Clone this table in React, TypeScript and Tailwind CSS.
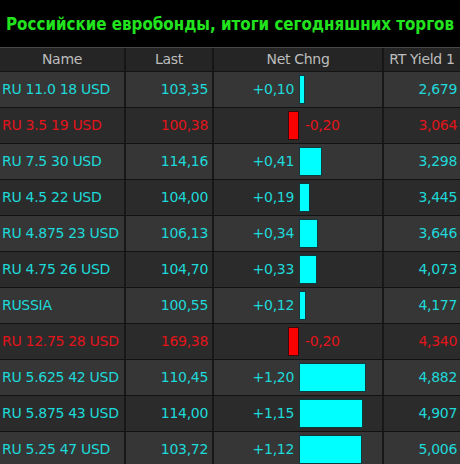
import React from "react";

type Row = { name: string; last: string; chg: number; chgText: string; yld: string; neg?: boolean };

const rows: Row[] = [
  { name: "RU 11.0 18 USD", last: "103,35", chg: 0.1, chgText: "+0,10", yld: "2,679" },
  { name: "RU 3.5 19 USD", last: "100,38", chg: -0.2, chgText: "-0,20", yld: "3,064", neg: true },
  { name: "RU 7.5 30 USD", last: "114,16", chg: 0.41, chgText: "+0,41", yld: "3,298" },
  { name: "RU 4.5 22 USD", last: "104,00", chg: 0.19, chgText: "+0,19", yld: "3,445" },
  { name: "RU 4.875 23 USD", last: "106,13", chg: 0.34, chgText: "+0,34", yld: "3,646" },
  { name: "RU 4.75 26 USD", last: "104,70", chg: 0.33, chgText: "+0,33", yld: "4,073" },
  { name: "RUSSIA", last: "100,55", chg: 0.12, chgText: "+0,12", yld: "4,177" },
  { name: "RU 12.75 28 USD", last: "169,38", chg: -0.2, chgText: "-0,20", yld: "4,340", neg: true },
  { name: "RU 5.625 42 USD", last: "110,45", chg: 1.2, chgText: "+1,20", yld: "4,882" },
  { name: "RU 5.875 43 USD", last: "114,00", chg: 1.15, chgText: "+1,15", yld: "4,907" },
  { name: "RU 5.25 47 USD", last: "103,72", chg: 1.12, chgText: "+1,12", yld: "5,006" },
];

const SCALE = 56;

export default function App() {
  return (
    <div className="w-[460px] h-[464px] bg-black overflow-hidden font-['DejaVu_Sans',sans-serif]">
      <div className="h-[47px] pt-[3px] flex items-center justify-center whitespace-nowrap text-[#22e41e] font-bold text-[16.8px] font-['DejaVu_Sans_Condensed',sans-serif]">
        Российские евробонды, итоги сегодняшних торгов
      </div>
      <div className="h-px bg-[#474747]" />
      <div className="grid grid-cols-[126px_88px_170px_76px] h-[24px] bg-[#252525] border-b border-[#141414] text-[14px] tracking-[-0.3px] text-[#bdbdbd]">
        <div className="flex items-center justify-center border-r-2 border-[#161616]">Name</div>
        <div className="flex items-center justify-center border-r-2 border-[#161616]">Last</div>
        <div className="flex items-center justify-center border-r-2 border-[#161616]">Net Chng</div>
        <div className="flex items-center justify-center whitespace-nowrap">RT Yield 1</div>
      </div>
      {rows.map((r, i) => {
        const color = r.neg ? "text-[#e3141a]" : "text-[#1ed9d9]";
        const bg = i % 2 === 0 ? "bg-[#363636]" : "bg-[#2b2b2b]";
        const w = Math.round(Math.abs(r.chg) * SCALE);
        return (
          <div
            key={i}
            className={`grid grid-cols-[126px_88px_170px_76px] h-[36px] border-b border-[#121212] text-[14px] tracking-[-0.3px] ${bg} ${color}`}
          >
            <div className="flex items-center pl-[2px] border-r-2 border-[#181818] whitespace-nowrap">{r.name}</div>
            <div className="flex items-center justify-end pr-[4px] border-r-2 border-[#181818]">{r.last}</div>
            <div className="flex items-center border-r-2 border-[#181818]">
              <div className="w-[85px] flex items-center justify-end">
                {r.neg ? (
                  <div className="h-[29px] bg-[#ff0000] border border-[#3a0a0a]" style={{ width: w }} />
                ) : (
                  <span className="pr-[5px]">{r.chgText}</span>
                )}
              </div>
              <div className="flex-1 flex items-center">
                {r.neg ? (
                  <span className="pl-[6px]">{r.chgText}</span>
                ) : (
                  <div className="h-[29px] bg-[#00ffff] border border-[#0d3b3b]" style={{ width: w }} />
                )}
              </div>
            </div>
            <div className="flex items-center justify-end pr-[3px]">{r.yld}</div>
          </div>
        );
      })}
    </div>
  );
}
